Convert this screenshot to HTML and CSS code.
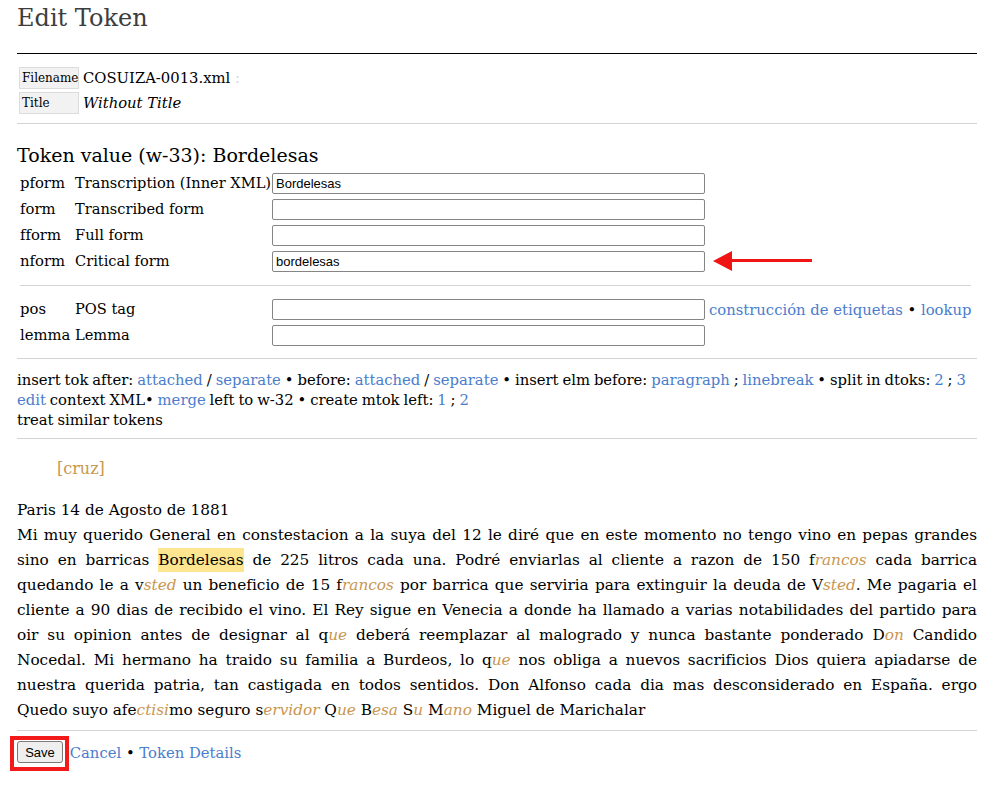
FILE: index.html
```html
<!DOCTYPE html>
<html lang="es">
<head>
<meta charset="utf-8">
<title>Edit Token</title>
<link rel="stylesheet" href="styles.css">
</head>
<body>
<div class="page">
  <h1 class="title">Edit Token</h1>
  <hr class="rule-dark">

  <div class="meta">
    <div class="meta-key">Filename</div>
    <div class="meta-val">COSUIZA-0013.xml <span class="faint">:</span></div>
    <div class="meta-key">Title</div>
    <div class="meta-val"><i>Without Title</i></div>
  </div>
  <hr class="rule">

  <h2 class="token-head">Token value (w-33): Bordelesas</h2>
  <div class="fields">
    <div class="code">pform</div><div class="label">Transcription (Inner XML)</div><div class="field"><input type="text" value="Bordelesas"></div><div class="extra"></div>
    <div class="code">form</div><div class="label">Transcribed form</div><div class="field"><input type="text" value=""></div><div class="extra"></div>
    <div class="code">fform</div><div class="label">Full form</div><div class="field"><input type="text" value=""></div><div class="extra"></div>
    <div class="code">nform</div><div class="label">Critical form</div><div class="field"><input type="text" value="bordelesas"></div>
    <div class="extra"><svg class="arrow" width="104" height="22" viewBox="0 0 104 22"><polygon points="2,11 21,1 21,21" fill="#f01515"/><rect x="19" y="9" width="82" height="3" fill="#f01515"/></svg></div>
    <div class="sep"></div>
    <div class="code">pos</div><div class="label">POS tag</div><div class="field"><input type="text" value=""></div><div class="extra"><a href="#">construcción de etiquetas</a> • <a href="#">lookup</a></div>
    <div class="code">lemma</div><div class="label">Lemma</div><div class="field"><input type="text" value=""></div><div class="extra"></div>
  </div>
  <hr class="rule rule-fields">

  <div class="actions">
    insert tok after: <a href="#">attached</a> / <a href="#">separate</a> • before: <a href="#">attached</a> / <a href="#">separate</a> • insert elm before: <a href="#">paragraph</a> ; <a href="#">linebreak</a> • split in dtoks: <a href="#">2</a> ; <a href="#">3</a><br>
    <a href="#">edit</a> context XML• <a href="#">merge</a> left to w-32 • create mtok left: <a href="#">1</a> ; <a href="#">2</a><br>
    treat similar tokens
  </div>
  <hr class="rule">

  <div class="context">
    <div class="cruz">[cruz]</div>
    <p class="letter">
      <span class="ln last">Paris 14 de Agosto de 1881</span>
      <span class="ln">Mi muy querido General en constestacion a la suya del 12 le diré que en este momento no tengo vino en pepas grandes</span>
      <span class="ln">sino en barricas <span class="hl">Bordelesas</span> de 225 litros cada una. Podré enviarlas al cliente a razon de 150 f<span class="ex">rancos</span> cada barrica</span>
      <span class="ln">quedando le a v<span class="ex">sted</span> un beneficio de 15 f<span class="ex">rancos</span> por barrica que serviria para extinguir la deuda de V<span class="ex">sted</span>. Me pagaria el</span>
      <span class="ln">cliente a 90 dias de recibido el vino. El Rey sigue en Venecia a donde ha llamado a varias notabilidades del partido para</span>
      <span class="ln">oir su opinion antes de designar al q<span class="ex">ue</span> deberá reemplazar al malogrado y nunca bastante ponderado D<span class="ex">on</span> Candido</span>
      <span class="ln">Nocedal. Mi hermano ha traido su familia a Burdeos, lo q<span class="ex">ue</span> nos obliga a nuevos sacrificios Dios quiera apiadarse de</span>
      <span class="ln">nuestra querida patria, tan castigada en todos sentidos. Don Alfonso cada dia mas desconsiderado en España. ergo</span>
      <span class="ln last">Quedo suyo afe<span class="ex">ctisi</span>mo seguro s<span class="ex">ervidor</span> Q<span class="ex">ue</span> B<span class="ex">esa</span> S<span class="ex">u</span> M<span class="ex">ano</span> Miguel de Marichalar</span>
    </p>
  </div>
  <hr class="rule">

  <div class="footer">
    <span class="mark"><button type="button" class="save">Save</button></span> <a href="#">Cancel</a> • <a href="#">Token Details</a>
  </div>
</div>
</body>
</html>
```
FILE: styles.css
```css
html, body {
  margin: 0;
  padding: 0;
  background: #fff;
}
body {
  font-family: "DejaVu Serif", "Liberation Serif", serif;
  font-size: 14.8px;
  color: #000;
}
a {
  color: #4a7dcc;
  text-decoration: none;
}
.page {
  width: 960px;
  padding: 0 12px 20px 17px;
}
.title {
  font-size: 24px;
  font-weight: normal;
  color: #3d3d3d;
  line-height: 30px;
  margin: 3px 0 0;
}
.rule-dark {
  border: 0;
  border-top: 1px solid #000;
  margin: 20px 0 13px;
}
.rule {
  border: 0;
  border-top: 1px solid #d4d4d4;
  margin: 0;
}
.rule-fields {
  margin-top: 10px;
}
.meta {
  display: grid;
  grid-template-columns: 60px auto;
  column-gap: 4px;
  row-gap: 3px;
  margin: 0 0 9px 2px;
  align-items: center;
}
.meta-key {
  background: #f2f2f2;
  border: 1px solid #dcdcdc;
  font-size: 12px;
  height: 20px;
  line-height: 20px;
  padding-left: 2px;
}
.meta-val {
  line-height: 20px;
}
.faint {
  color: #d8d8d8;
}
.token-head {
  font-size: 19px;
  font-weight: normal;
  line-height: 26px;
  margin: 18px 0 2px;
}
.fields {
  display: grid;
  grid-template-columns: 55px 197px 433px auto;
  grid-template-rows: 26px 26px 26px 26px 22px 26px 26px;
  width: 947px;
  margin-left: 3px;
  align-items: center;
}
.code, .label {
  line-height: 26px;
  white-space: nowrap;
}
.label {
  font-size: 14.6px;
}
.field input {
  display: block;
  box-sizing: border-box;
  width: 433px;
  height: 21px;
  margin: 0;
  padding: 1px 3px;
  border: 1px solid #858585;
  border-radius: 2px;
  font-family: "Liberation Sans", Arial, sans-serif;
  font-size: 13px;
  color: #000;
}
.extra {
  padding-left: 4px;
  white-space: nowrap;
}
.arrow {
  display: block;
  margin-left: 2px;
}
.fields .sep {
  grid-column: 1 / -1;
  border-top: 1px solid #d4d4d4;
  height: 0;
}
.actions {
  line-height: 20px;
  padding: 11px 0 8px;
  word-spacing: -0.8px;
}
.context {
  padding-top: 18px;
}
.cruz {
  color: #c9964f;
  font-size: 16px;
  padding-left: 40px;
  line-height: 24px;
}
.letter {
  font-size: 15.3px;
  line-height: 25px;
  margin: 17px 0 7px;
}
.ln {
  display: block;
  text-align: justify;
  text-align-last: justify;
}
.ln.last {
  text-align-last: left;
}
.hl {
  background: #fde68f;
  padding: 3px 0;
}
.ex {
  font-style: italic;
  color: #c9964f;
}
.footer {
  padding-top: 5px;
  line-height: 20px;
}
.mark {
  display: inline-block;
  vertical-align: middle;
  border: 4px solid #f21a1a;
  padding: 1px 2px 4px 3px;
  margin-left: -7px;
  margin-right: -4px;
}
.save {
  display: block;
  font-family: "Liberation Sans", Arial, sans-serif;
  font-size: 13px;
  height: 22px;
  width: 46px;
  padding: 0;
  background: #efefef;
  border: 1px solid #7a7a7a;
  border-radius: 3px;
  color: #000;
}
```
